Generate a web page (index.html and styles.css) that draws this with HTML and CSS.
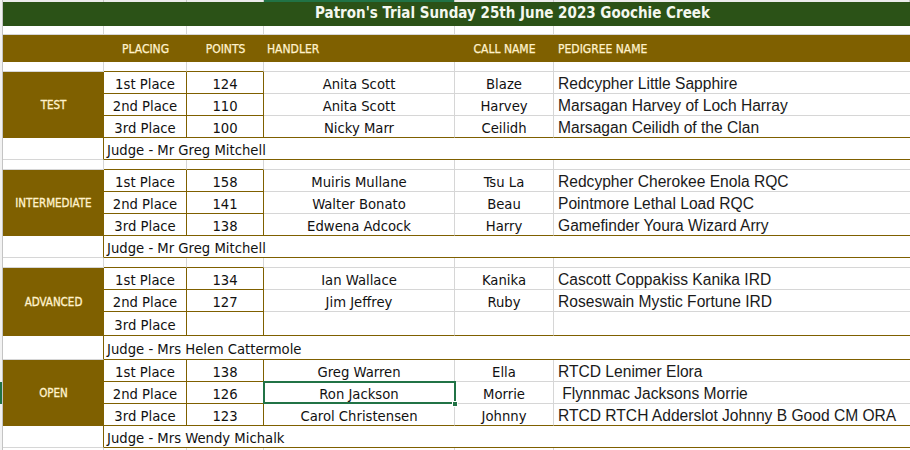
FILE: index.html
```html
<!DOCTYPE html>
<html>
<head>
<meta charset="utf-8">
<link rel="stylesheet" href="styles.css">
</head>
<body>
<div class="page">
  <div class="rowhead"></div>
  <div class="sheet">
    <div class="row colheads">
      <div class="ch"></div><div class="ch"></div><div class="ch"></div><div class="ch sel"></div><div class="ch"></div><div class="ch"></div>
    </div>
    <div class="title">Patron's Trial Sunday 25th June 2023 Goochie Creek</div>
    <div class="row gap g9">
      <div class="c"></div><div class="c"></div><div class="c"></div><div class="c"></div><div class="c"></div><div class="c last"></div>
    </div>
    <div class="row header">
      <div class="h"></div>
      <div class="h">PLACING</div>
      <div class="h">POINTS</div>
      <div class="h left">HANDLER</div>
      <div class="h">CALL NAME</div>
      <div class="h left pdh">PEDIGREE NAME</div>
    </div>
    <div class="row gap g10">
      <div class="c"></div><div class="c bb"></div><div class="c bb"></div><div class="c"></div><div class="c"></div><div class="c last"></div>
    </div>

    <div class="sec">
      <div class="lbl">TEST</div>
      <div class="c b">1st Place</div><div class="c b">124</div><div class="c">Anita Scott</div><div class="c">Blaze</div><div class="c pd">Redcypher Little Sapphire</div>
      <div class="c b">2nd Place</div><div class="c b">110</div><div class="c">Anita Scott</div><div class="c">Harvey</div><div class="c pd">Marsagan Harvey of Loch Harray</div>
      <div class="c b">3rd Place</div><div class="c b">100</div><div class="c r3">Nicky Marr</div><div class="c r3">Ceilidh</div><div class="c pd r3">Marsagan Ceilidh of the Clan</div>
      <div class="c ja"></div><div class="c judge">Judge - Mr Greg Mitchell</div>
    </div>
    <div class="row gap g10">
      <div class="c"></div><div class="c bb"></div><div class="c bb"></div><div class="c"></div><div class="c"></div><div class="c last"></div>
    </div>

    <div class="sec">
      <div class="lbl">INTERMEDIATE</div>
      <div class="c b">1st Place</div><div class="c b">158</div><div class="c">Muiris Mullane</div><div class="c">Tsu La</div><div class="c pd">Redcypher Cherokee Enola RQC</div>
      <div class="c b">2nd Place</div><div class="c b">141</div><div class="c">Walter Bonato</div><div class="c">Beau</div><div class="c pd">Pointmore Lethal Load RQC</div>
      <div class="c b">3rd Place</div><div class="c b">138</div><div class="c r3">Edwena Adcock</div><div class="c r3">Harry</div><div class="c pd r3">Gamefinder Youra Wizard Arry</div>
      <div class="c ja"></div><div class="c judge">Judge - Mr Greg Mitchell</div>
    </div>
    <div class="row gap g10">
      <div class="c"></div><div class="c bb"></div><div class="c bb"></div><div class="c"></div><div class="c"></div><div class="c last"></div>
    </div>

    <div class="sec adv">
      <div class="lbl">ADVANCED</div>
      <div class="c b">1st Place</div><div class="c b">134</div><div class="c">Ian Wallace</div><div class="c">Kanika</div><div class="c pd">Cascott Coppakiss Kanika IRD</div>
      <div class="c b">2nd Place</div><div class="c b">127</div><div class="c">Jim Jeffrey</div><div class="c">Ruby</div><div class="c pd">Roseswain Mystic Fortune IRD</div>
      <div class="c b">3rd Place</div><div class="c b"></div><div class="c r3"></div><div class="c r3"></div><div class="c pd r3"></div>
      <div class="c ja"></div><div class="c judge">Judge - Mrs Helen Cattermole</div>
    </div>

    <div class="sec">
      <div class="lbl">OPEN</div>
      <div class="c b">1st Place</div><div class="c b">138</div><div class="c">Greg Warren</div><div class="c">Ella</div><div class="c pd">RTCD Lenimer Elora</div>
      <div class="c b">2nd Place</div><div class="c b">126</div><div class="c active">Ron Jackson<span class="handle"></span></div><div class="c">Morrie</div><div class="c pd">&nbsp;Flynnmac Jacksons Morrie</div>
      <div class="c b">3rd Place</div><div class="c b">123</div><div class="c r3">Carol Christensen</div><div class="c r3">Johnny</div><div class="c pd r3">RTCD RTCH Adderslot Johnny B Good CM ORA</div>
      <div class="c ja"></div><div class="c judge">Judge - Mrs Wendy Michalk</div>
    </div>
    <div class="row gap g10">
      <div class="c"></div><div class="c"></div><div class="c"></div><div class="c"></div><div class="c"></div><div class="c last"></div>
    </div>
  </div>
</div>
</body>
</html>
```
FILE: styles.css
```css
:root {
  --brown: #7f6000;
  --grid: #d6d6d6;
  --green: #2b5217;
  --cream: #fff2cc;
  --ui: "DejaVu Sans Condensed", "DejaVu Sans", sans-serif;
}

* { box-sizing: border-box; }

body {
  margin: 0;
  background: #ffffff;
  font-family: var(--ui);
  font-stretch: semi-condensed;
  color: #111;
}

.page {
  display: flex;
  width: 910px;
  height: 450px;
  overflow: hidden;
}

.rowhead {
  flex: none;
  width: 3px;
  border-right: 1px solid #c4c4c4;
  background: linear-gradient(to bottom, #f2f2f2 0 382px, #217346 382px 404px, #f2f2f2 404px);
}

.sheet {
  flex: 1;
  display: flex;
  flex-direction: column;
}
.sheet > * { flex: none; }

.row, .sec {
  display: grid;
  grid-template-columns: 101px 83px 77px 191px 99px 1fr;
}

.colheads { height: 2px; }
.ch {
  background: #ececec;
  border-right: 1px solid #c8c8c8;
}
.ch.sel { background: #217346; }

.title {
  height: 24px;
  background: var(--green);
  color: #f4f8ef;
  font-weight: bold;
  font-size: 15px;
  line-height: 22px;
  text-align: center;
  padding-left: 112px;
  white-space: nowrap;
}

.g9 { height: 9px; }
.g10 { height: 10px; }

.header {
  height: 27px;
  background: var(--brown);
}
.h {
  display: flex;
  align-items: center;
  justify-content: center;
  color: var(--cream);
  font-size: 12px;
  -webkit-text-stroke: 0.25px var(--cream);
  white-space: nowrap;
}
.h.left { justify-content: flex-start; padding-left: 3px; }
.h.pdh { padding-left: 4px; }

.sec { grid-template-rows: repeat(4, 22px); }
.sec.adv { grid-template-rows: 22px 22px 24px 24px; }

.c {
  display: flex;
  align-items: center;
  justify-content: center;
  border-right: 1px solid var(--grid);
  border-bottom: 1px solid var(--grid);
  font-size: 14.7px;
  white-space: nowrap;
  padding-top: 1px;
}
.c.last { border-right: none; }
.c.bb { border-bottom-color: var(--brown); }
.c.b {
  border-right-color: var(--brown);
  border-bottom-color: var(--brown);
}
.c.r3 { border-bottom-color: var(--brown); }

.lbl {
  grid-column: 1;
  grid-row: 1 / 4;
  display: flex;
  align-items: center;
  justify-content: center;
  background: var(--brown);
  color: var(--cream);
  font-size: 11.5px;
  -webkit-text-stroke: 0.3px var(--cream);
}

.c.pd {
  justify-content: flex-start;
  padding-left: 4px;
  padding-top: 2px;
  border-right: none;
  font-family: "Liberation Sans", Arial, sans-serif;
  font-stretch: normal;
  font-size: 15.6px;
  color: #1a1a1a;
}

.c.ja {
  border-right-color: var(--brown);
}

.c.judge {
  grid-column: 2 / -1;
  justify-content: flex-start;
  padding-left: 3px;
  border-right: none;
  border-bottom-color: var(--brown);
}

.c.active {
  position: relative;
}
.c.active::after {
  content: "";
  position: absolute;
  left: -1px;
  top: -1px;
  right: -2px;
  bottom: -1px;
  border: 2px solid #217346;
}
.handle {
  position: absolute;
  right: -4px;
  bottom: -4px;
  width: 6px;
  height: 6px;
  background: #217346;
  border: 1px solid #ffffff;
  z-index: 2;
}
```
